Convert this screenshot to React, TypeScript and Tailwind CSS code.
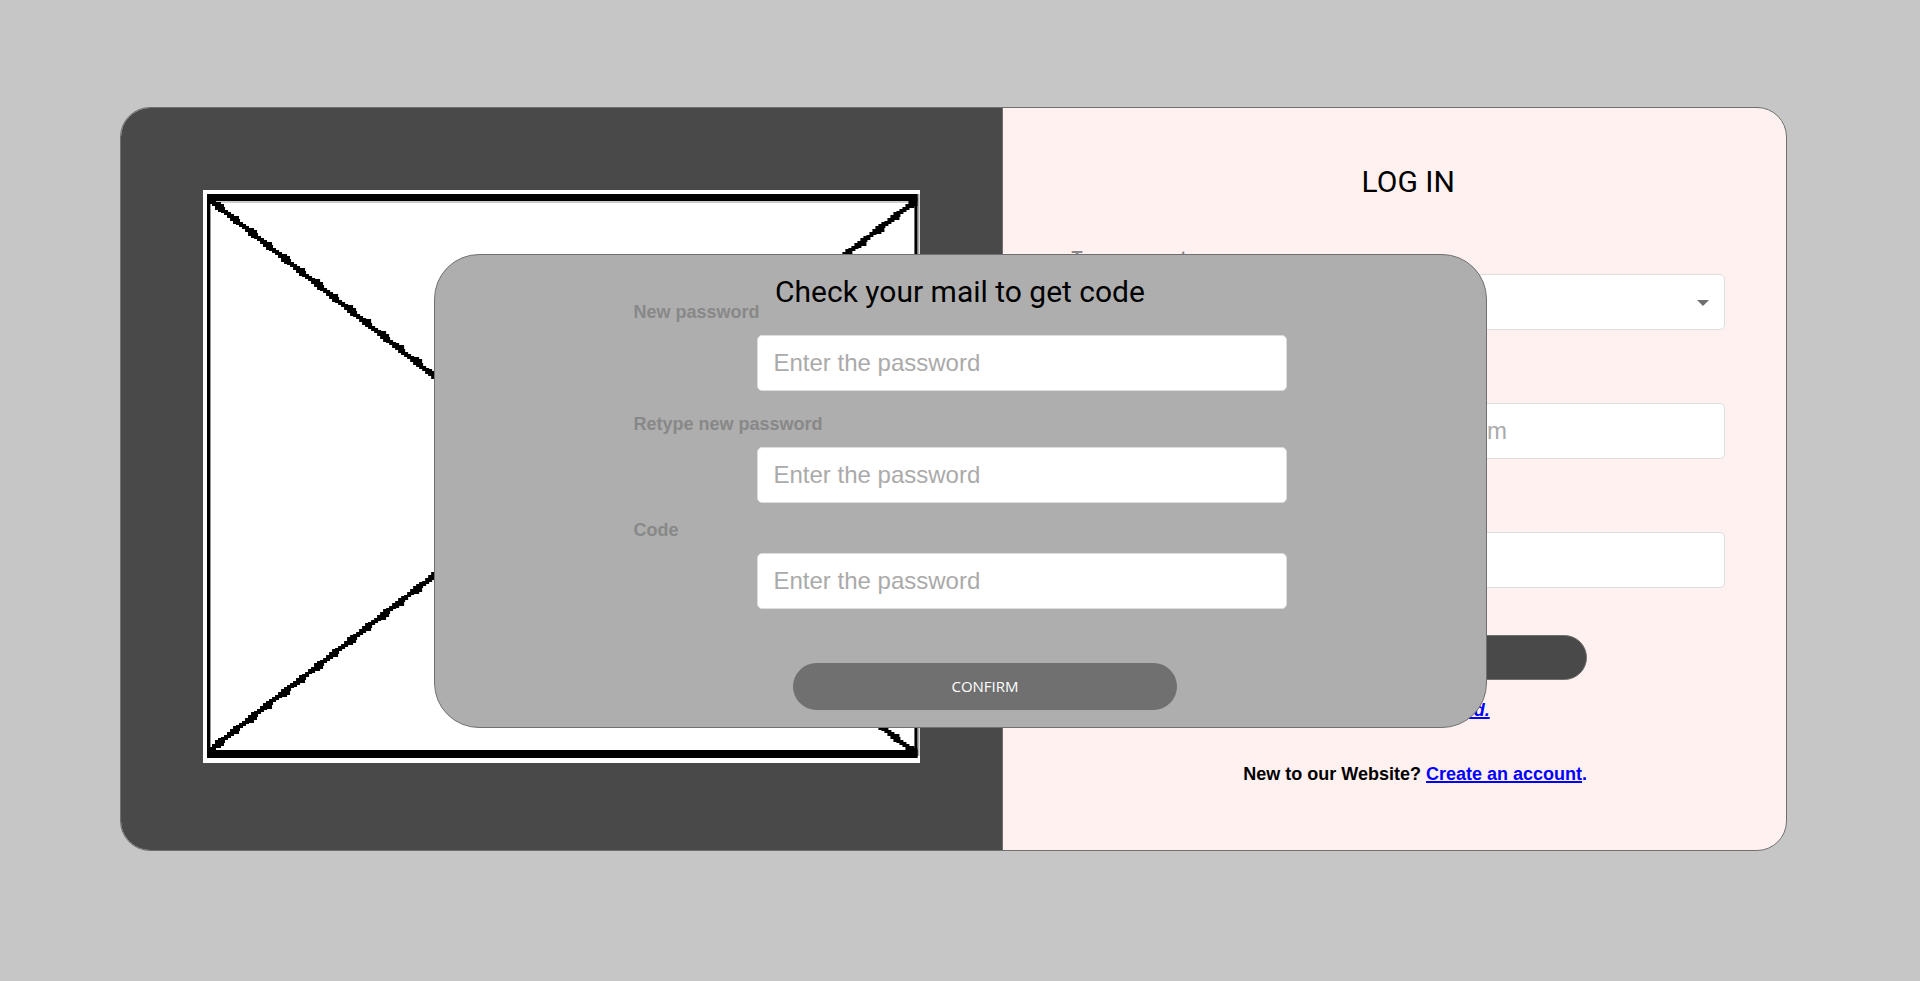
import type { ReactNode } from "react";

const labelClass = "block text-[18px] leading-5 font-bold text-[#888888]";
const fieldClass =
  "block h-14 w-full rounded-[5px] border border-[#dddddd] bg-white px-4 text-2xl text-black placeholder:text-[#aaaaaa] placeholder:opacity-100";

function Field({ id, label, className, children }: { id: string; label: string; className: string; children: ReactNode }) {
  return (
    <div className={`flex flex-col ${className}`}>
      <label htmlFor={id} className={labelClass}>
        {label}
      </label>
      <div className="relative w-[530px] max-w-full self-end">{children}</div>
    </div>
  );
}

const HEIGHT_PATTERN = [5, 6, 8, 8, 6, 5, 6, 7, 8, 6, 5];

/** Hand-drawn looking diagonal built from narrow columns of uneven height. */
function RoughLine({ x1, y1, x2, y2 }: { x1: number; y1: number; x2: number; y2: number }) {
  const step = 3;
  const count = Math.floor((x2 - x1) / step);
  return (
    <g>
      {Array.from({ length: count + 1 }, (_, i) => {
        const h = HEIGHT_PATTERN[i % 11];
        const x = x1 + i * step;
        const y = y1 + ((y2 - y1) * i) / count - h / 2;
        return <rect key={i} x={x - 1} y={Math.round(y)} width={h > 7 ? 6 : 4} height={h} />;
      })}
    </g>
  );
}

function Placeholder() {
  return (
    <svg viewBox="0 0 717 573" preserveAspectRatio="none" className="block h-[573px] w-full bg-white" role="img" aria-label="Picture">
      <rect x="4" y="11" width="710" height="2" fill="#cccccc" />
      <rect x="714" y="4" width="2" height="562" fill="#aaaaaa" />
      <rect x="7" y="11" width="1" height="550" fill="#999999" />
      <RoughLine x1={7} y1={11} x2={711} y2={562} />
      <RoughLine x1={7} y1={559} x2={711} y2={12} />
      <rect x="4" y="4" width="710" height="7" />
      <rect x="4" y="560" width="710" height="8" />
      <rect x="4" y="4" width="3" height="564" />
      <rect x="711" y="4" width="3" height="564" />
    </svg>
  );
}

function LoginPanel() {
  return (
    <form className="flex-1 pt-16 pr-[61px] pb-16 pl-[68px]" onSubmit={(e) => e.preventDefault()}>
      <h1 className="pl-5 text-center font-['Roboto',sans-serif] text-[30px] leading-5">LOG IN</h1>
      <Field id="account" label="Type account" className="mt-14 gap-1.5">
        <select id="account" className={`${fieldClass} appearance-none`} defaultValue="User">
          <option>User</option>
          <option>Admin</option>
        </select>
        <svg viewBox="0 0 12 6" className="pointer-events-none absolute top-[26px] right-4 h-1.5 w-3" fill="#707070" aria-hidden="true">
          <path d="M0 0h12L6 6z" />
        </svg>
      </Field>
      <Field id="email" label="Email" className="mt-[47px] gap-1.5">
        <input id="email" type="email" placeholder="customer.email@gmail.com" className={fieldClass} />
      </Field>
      <Field id="password" label="Password" className="mt-[47px] gap-1.5">
        <input id="password" type="password" placeholder="Enter the password" className={fieldClass} />
      </Field>
      <div className="mt-[47px] flex justify-center pr-1.5">
        <button type="submit" className="h-[45px] w-96 rounded-full border border-[#707070] bg-[#494949] font-['Open_Sans',sans-serif] text-[15px] text-white">
          LOG IN
        </button>
      </div>
      <p className="mt-5 pr-1 text-center text-[18px] leading-5 font-bold italic">
        <a href="#forgot" className="text-[#0000ff] underline decoration-2">
          I forgot my password.
        </a>
      </p>
      <p className="mt-11 pl-[34px] text-center text-[18px] leading-5 font-bold text-black">
        New to our Website?{" "}
        <a href="#register" className="text-[#0000ff]">
          <span className="underline decoration-2">Create an account</span>.
        </a>
      </p>
    </form>
  );
}

function ResetDialog() {
  return (
    <div className="fixed inset-0 flex items-center justify-center">
      <form
        role="dialog"
        aria-labelledby="reset-title"
        className="w-[1053px] max-w-full rounded-[45px] border border-[#707070] bg-[#aeaeae] px-[199px] pt-[27px] pb-[17px]"
        onSubmit={(e) => e.preventDefault()}
      >
        <h2 id="reset-title" className="text-center font-['Roboto',sans-serif] text-[30px] leading-5">
          Check your mail to get code
        </h2>
        <Field id="new-password" label="New password" className="gap-[13px]">
          <input id="new-password" type="password" placeholder="Enter the password" className={fieldClass} />
        </Field>
        <Field id="retype-password" label="Retype new password" className="mt-[23px] gap-[13px]">
          <input id="retype-password" type="password" placeholder="Enter the password" className={fieldClass} />
        </Field>
        <Field id="code" label="Code" className="mt-[17px] gap-[13px]">
          <input id="code" type="text" placeholder="Enter the password" className={fieldClass} />
        </Field>
        <div className="mt-[54px] flex justify-center pl-[50px]">
          <button type="submit" className="h-[47px] w-96 rounded-full bg-[#707070] font-['Open_Sans',sans-serif] text-[15px] text-white">
            CONFIRM
          </button>
        </div>
      </form>
    </div>
  );
}

export default function App() {
  return (
    <div className="min-h-screen bg-[#c6c6c6] pt-[107px] pr-[133px] pb-16 pl-[120px] font-['Liberation_Sans',Arial,sans-serif] text-black">
      <main className="flex overflow-hidden rounded-[30px] border border-[#707070] bg-[#fff1ef]">
        <div className="w-[53%] border-r border-[#707070] bg-[#494949] px-[82px] pt-[82px] pb-[87px]">
          <Placeholder />
        </div>
        <LoginPanel />
      </main>
      <ResetDialog />
    </div>
  );
}
